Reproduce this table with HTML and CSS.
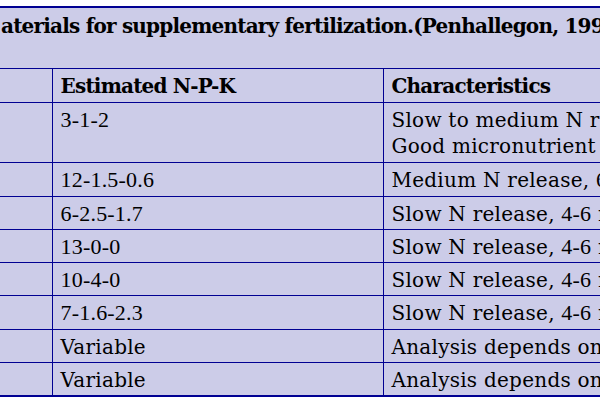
FILE: index.html
```html
<!DOCTYPE html>
<html>
<head>
<meta charset="utf-8">
<link rel="stylesheet" href="styles.css">
</head>
<body>
<div class="page">
  <table class="npk">
    <colgroup>
      <col class="c-name">
      <col class="c-npk">
      <col class="c-char">
    </colgroup>
    <tr class="title-row">
      <td colspan="3" class="title">aterials for supplementary fertilization.(Penhallegon, 1992)<br>&nbsp;</td>
    </tr>
    <tr class="head">
      <td></td>
      <td>Estimated N-P-K</td>
      <td>Characteristics</td>
    </tr>
    <tr class="tall">
      <td></td>
      <td class="num">3-1-2</td>
      <td>Slow to medium N release, <span class="d">2-6</span> months.<br>Good micronutrient source.</td>
    </tr>
    <tr class="tall"><td></td><td class="num">12-1.5-0.6</td><td>Medium N release, <span class="d">6-8</span> weeks.</td></tr>
    <tr><td></td><td class="num">6-2.5-1.7</td><td>Slow N release, <span class="d">4-6</span> months.</td></tr>
    <tr><td></td><td class="num">13-0-0</td><td>Slow N release, <span class="d">4-6</span> months.</td></tr>
    <tr><td></td><td class="num">10-4-0</td><td>Slow N release, <span class="d">4-6</span> months.</td></tr>
    <tr class="tall"><td></td><td class="num">7-1.6-2.3</td><td>Slow N release, <span class="d">4-6</span> months.</td></tr>
    <tr><td></td><td>Variable</td><td>Analysis depends on source.</td></tr>
    <tr><td></td><td>Variable</td><td>Analysis depends on source.</td></tr>
  </table>
</div>
</body>
</html>
```
FILE: styles.css
```css
html, body {
  margin: 0;
  padding: 0;
  background: #ffffff;
  overflow: hidden;
  width: 600px;
  height: 410px;
}

.page {
  padding-top: 6px;
  width: 1000px;
}

.npk {
  border-collapse: collapse;
  table-layout: fixed;
  width: 953px;
  background: #ccccE8;
  font-family: "DejaVu Serif", "Liberation Serif", serif;
  font-size: 20px;
  color: #000000;
  border-top: 2px solid #000092;
  border-bottom: 2px solid #000092;
}

.c-name { width: 52px; }
.c-npk { width: 331px; }
.c-char { width: 570px; }

.npk td {
  border: 1px solid #000092;
  border-left: 0;
  padding: 4px 8px 2px 8px;
  line-height: 26px;
  letter-spacing: 0.25px;
  white-space: nowrap;
  vertical-align: top;
  overflow: hidden;
}

.npk tr.tall td {
  padding-bottom: 3px;
}

.npk td:first-child {
  border-right: 1px solid #000092;
}

.npk td + td {
  border-left: 1px solid #000092;
}

.npk td.num,
.npk .d {
  font-family: "Liberation Serif", "Times New Roman", serif;
  font-size: 22px;
  letter-spacing: 0.2px;
}

.title-row td.title {
  padding: 5px 0 3px 1px;
  font-weight: bold;
  letter-spacing: -0.8px;
  border-top: 2px solid #000092;
}

.head td {
  font-weight: bold;
  letter-spacing: -0.8px;
  padding-top: 4px;
  padding-bottom: 3px;
}
```
